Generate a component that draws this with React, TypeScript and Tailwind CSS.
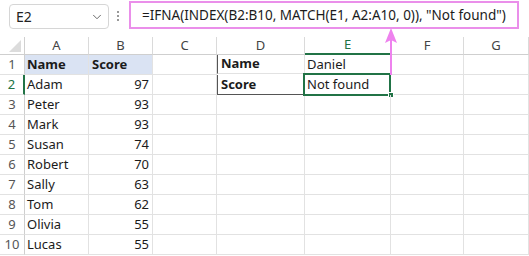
import React from "react";
import { ChevronDown } from "lucide-react";

const cols = [
  { k: "", w: 25 },
  { k: "A", w: 64 },
  { k: "B", w: 64 },
  { k: "C", w: 64 },
  { k: "D", w: 88 },
  { k: "E", w: 86 },
  { k: "F", w: 73 },
  { k: "G", w: 65 },
];

const data: [string, string][] = [
  ["Name", "Score"],
  ["Adam", "97"],
  ["Peter", "93"],
  ["Mark", "93"],
  ["Susan", "74"],
  ["Robert", "70"],
  ["Sally", "63"],
  ["Tom", "62"],
  ["Olivia", "55"],
  ["Lucas", "55"],
];

export default function App() {
  const font = { fontFamily: '"Noto Sans", "Open Sans", sans-serif' };
  return (
    <div className="relative w-[529px] h-[256px] overflow-hidden bg-white text-[13px] text-[#1b1b1b]" style={font}>
      {/* Formula bar */}
      <div className="flex h-[37px] items-start pt-[1px]">
        <div className="ml-[9px] mt-[3px] flex h-[25px] w-[100px] items-center justify-between rounded-[4px] border border-[#d6d6d6] pl-[6px] pr-[4px] text-[14px] text-[#222]">
          <span>E2</span>
          <ChevronDown size={14} strokeWidth={1.5} className="text-[#555]" />
        </div>
        <div className="mx-[8px] mt-[10px] flex flex-col gap-[2px]">
          <div className="h-[2px] w-[2px] rounded-full bg-[#777]" />
          <div className="h-[2px] w-[2px] rounded-full bg-[#777]" />
          <div className="h-[2px] w-[2px] rounded-full bg-[#777]" />
        </div>
        <div className="ml-[2px] mr-[10px] flex h-[28px] flex-1 items-center border-2 border-[#ea8fea] pl-[11px] text-[13.5px] text-[#1b1b1b] whitespace-nowrap">
          =IFNA(INDEX(B2:B10, MATCH(E1, A2:A10, 0)), "Not found")
        </div>
      </div>

      {/* Sheet grid */}
      <div
        className="grid"
        style={{ gridTemplateColumns: cols.map((c) => `${c.w}px`).join(" ") }}
      >
        {/* header row */}
        {cols.map((c, i) => (
          <div
            key={"h" + i}
            className={
              "relative flex h-[18px] items-center justify-center border-b text-[13px] " +
              (i === 0 ? "border-r border-[#d0d0d0] " : "border-r border-[#dadada] ") +
              (c.k === "E" ? "border-b-2 border-b-[#217346] text-[#217346]" : "border-b-[#cfcfcf] text-[#444]")
            }
          >
            {i === 0 ? (
              <svg className="absolute right-[3px] bottom-[2px]" width="12" height="12" viewBox="0 0 12 12">
                <polygon points="12,0 12,12 0,12" fill="#dcdcdc" />
              </svg>
            ) : (
              c.k
            )}
          </div>
        ))}
        {data.map((row, r) => {
          const rn = r + 1;
          return (
            <React.Fragment key={"r" + r}>
              <div
                className={
                  "flex h-[20px] items-center justify-center border-b border-[#e2e2e2] text-[13px] " +
                  (rn === 2 ? "border-r-2 border-r-[#217346] text-[#217346]" : "border-r border-r-[#cfcfcf] text-[#555]")
                }
              >
                {rn}
              </div>
              {/* A */}
              <div
                className={
                  "flex h-[20px] items-center border-r border-b border-[#e2e2e2] pl-[2px] " +
                  (rn === 1 ? "bg-[#dae3f3] font-bold" : "")
                }
              >
                {row[0]}
              </div>
              {/* B */}
              <div
                className={
                  "flex h-[20px] items-center border-r border-b border-[#e2e2e2] " +
                  (rn === 1 ? "bg-[#dae3f3] font-bold pl-[3px]" : "justify-end pr-[3px]")
                }
              >
                {row[1]}
              </div>
              {/* C */}
              <div className="h-[20px] border-r border-b border-[#e2e2e2]" />
              {/* D */}
              <div
                className={
                  "flex h-[20px] items-center border-r border-b border-[#e2e2e2] pl-[3px] font-bold " +
                  (rn === 1 ? "border-l border-l-[#555] border-t border-t-[#555] h-[20px] -mt-px" : "") +
                  (rn === 2 ? "border-l border-l-[#555] border-b-[#555]" : "")
                }
              >
                {rn === 1 ? "Name" : rn === 2 ? "Score" : ""}
              </div>
              {/* E */}
              <div
                className={
                  "relative flex h-[20px] items-center border-r border-b border-[#e2e2e2] pl-[2px] " +
                  (rn === 2 ? "border-b-[#555]" : "")
                }
              >
                {rn === 1 ? "Daniel" : ""}
                {rn === 2 ? (
                  <>
                    <div className="absolute left-[-2px] top-[-2px] h-[23px] w-[88px] border-2 border-[#217346]" />
                    <div className="absolute right-[-4px] bottom-[-4px] h-[6px] w-[6px] border border-white bg-[#217346]" />
                    <span className="relative">Not found</span>
                  </>
                ) : null}
              </div>
              <div className="h-[20px] border-r border-b border-[#e2e2e2]" />
              <div className="h-[20px] border-r border-b border-[#e2e2e2]" />
            </React.Fragment>
          );
        })}
      </div>

      {/* Pink arrow */}
      <svg className="absolute left-[384px] top-[28px]" width="14" height="50" viewBox="0 0 14 50">
        <line x1="7" y1="10" x2="7" y2="47" stroke="#ee82ee" strokeWidth="2" />
        <polygon points="7,0 13,15 7,12 1,15" fill="#ee82ee" />
      </svg>
    </div>
  );
}
